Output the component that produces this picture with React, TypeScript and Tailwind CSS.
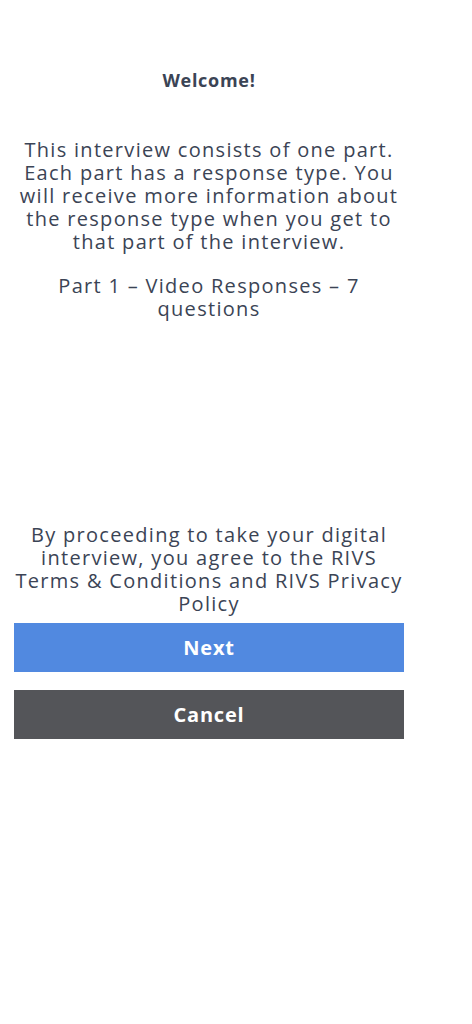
const App = () => {
  return (
    <div className="min-h-[1024px] bg-white text-[#3b4455]" style={{ fontFamily: '"Open Sans", "Liberation Sans", sans-serif' }}>
      <div className="ml-[14px] w-[390px] pt-[69px] text-center">
        <h1 className="text-[18px] leading-[22px] font-bold tracking-[0.04em]">Welcome!</h1>

        <p className="mt-[47px] px-1 text-[20px] leading-[23px] tracking-[0.065em]">
          This interview consists of one part. Each part has a response type. You will receive more information about
          the response type when you get to that part of the interview.
        </p>

        <p className="mt-[21px] px-10 text-[20px] leading-[23px] tracking-[0.065em]">
          Part 1 – Video Responses – 7 questions
        </p>

        <p className="mt-[203px] text-[20px] leading-[23px] tracking-[0.065em]">
          By proceeding to take your digital interview, you agree to the RIVS Terms &amp; Conditions and RIVS Privacy
          Policy
        </p>

        <div className="mt-[8px] flex flex-col gap-[18px]">
          <button type="button" className="h-[49px] w-full bg-[#5189e0] text-[20px] font-bold tracking-[0.04em] text-white">
            Next
          </button>
          <button type="button" className="h-[49px] w-full bg-[#545559] text-[20px] font-bold tracking-[0.04em] text-white">
            Cancel
          </button>
        </div>
      </div>
    </div>
  );
};

export default App;
